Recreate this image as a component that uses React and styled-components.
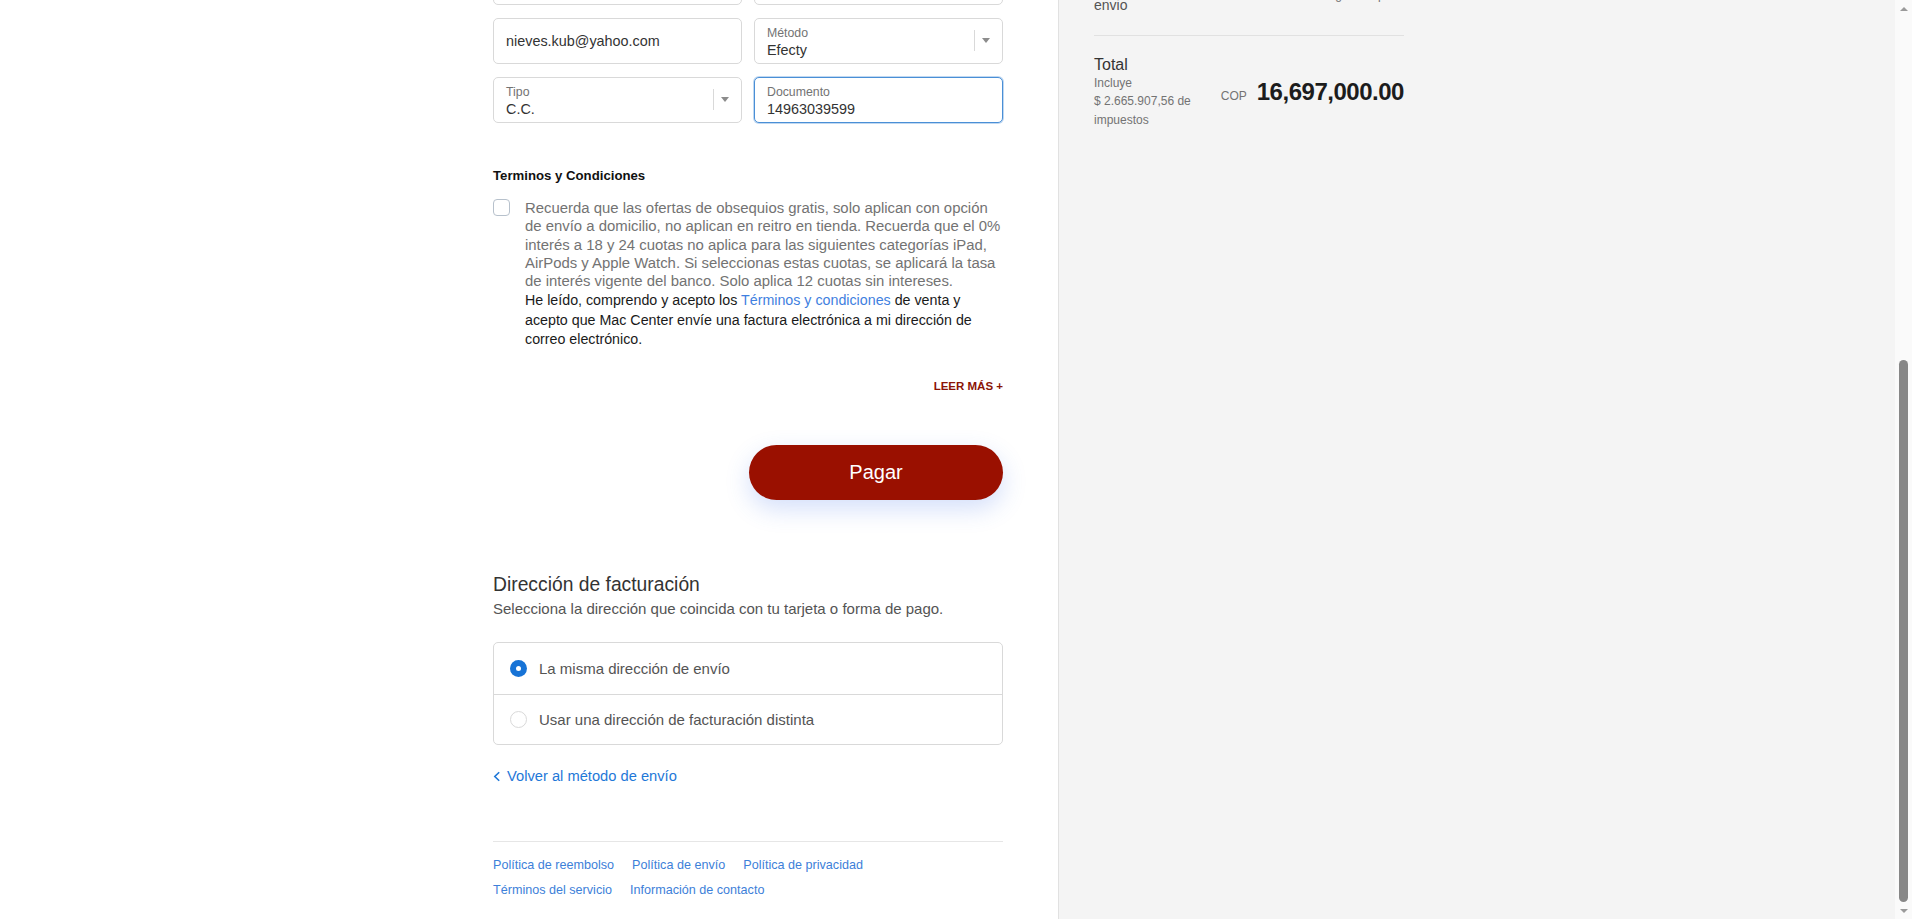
import React, { useLayoutEffect, useRef } from "react";
import styled, { createGlobalStyle } from "styled-components";

const GlobalStyle = createGlobalStyle`
  html, body {
    margin: 0;
    padding: 0;
  }
  body {
    font-family: "Liberation Sans", Arial, sans-serif;
    color: #333333;
  }
  *, *::before, *::after {
    box-sizing: border-box;
  }
`;

const Frame = styled.div`
  height: 100vh;
  display: flex;
  overflow: hidden;
`;

const Page = styled.div`
  flex: 1;
  min-width: 0;
  overflow-y: scroll;
  scrollbar-width: none;
  background: #ffffff;
`;

/* window scrollbar, drawn at the right edge */
const ScrollRail = styled.div`
  flex: 0 0 17px;
  display: flex;
  flex-direction: column;
  align-items: center;
  background: #fafafa;
`;

const RailArrow = styled.span`
  flex: 0 0 17px;
  display: flex;
  align-items: center;
  justify-content: center;

  &::before {
    content: "";
    width: 0;
    height: 0;
    border-left: 4px solid transparent;
    border-right: 4px solid transparent;
    border-${(p) => (p.$down ? "top" : "bottom")}: 4px solid #9a9a9a;
  }
`;

const RailTrack = styled.div`
  flex: 1;
  display: flex;
  flex-direction: column;
  justify-content: flex-end;
`;

const RailThumb = styled.span`
  width: 9px;
  height: 542px;
  border-radius: 5px;
  background: #878787;
`;

const Layout = styled.div`
  display: flex;
  min-height: 100%;
`;

const Main = styled.main`
  flex: 0 0 1058px;
  display: flex;
  justify-content: flex-end;
  padding: 0 55px 20px 0;
`;

const MainInner = styled.div`
  width: 510px;
`;

const Sidebar = styled.aside`
  flex: 1;
  background: #f4f4f4;
  border-left: 1px solid #e1e1e1;
  padding: 70.5px 0 0 35px;
`;

const SidebarInner = styled.div`
  width: 310px;
`;

/* header (scrolled out of view) */
const Header = styled.header`
  height: 201.5px;
  display: flex;
  flex-direction: column;
  justify-content: flex-end;
  padding-bottom: 22px;
`;

const Brand = styled.div`
  font-size: 28px;
  line-height: 32px;
  color: #333333;
`;

const Breadcrumb = styled.div`
  margin-top: 14px;
  font-size: 12px;
  line-height: 18px;
  color: #737373;
`;

const SectionTitle = styled.h2`
  margin: 32px 0 0;
  font-size: 18px;
  font-weight: 400;
  line-height: 24px;
  color: #333333;
`;

/* fields */
const FieldGrid = styled.div`
  display: grid;
  grid-template-columns: 1fr 1fr;
  grid-auto-rows: 46px;
  gap: 13px 12px;
`;

const Field = styled.div`
  border: 1px solid ${(p) => (p.$focused ? "#4a8fd6" : "#d9d9d9")};
  box-shadow: ${(p) => (p.$focused ? "0 0 0 1px rgba(74, 143, 214, 0.35)" : "none")};
  border-radius: 5px;
  background: #ffffff;
  padding: 0 12px;
  display: flex;
  align-items: center;
  gap: 9px;
`;

const FieldBody = styled.div`
  flex: 1;
  min-width: 0;
  display: flex;
  flex-direction: column;
  padding-top: ${(p) => (p.$labelled ? "2px" : "0")};
`;

const FieldLabel = styled.span`
  font-size: 12.3px;
  line-height: 16px;
  color: #737373;
`;

const FieldValue = styled.span`
  font-size: 14.4px;
  line-height: 18px;
  color: #333333;
`;

const Caret = styled.span`
  display: flex;
  align-items: center;
  gap: 7px;
`;

const CaretLine = styled.span`
  width: 1px;
  height: 21px;
  background: #d9d9d9;
`;

const CaretArrow = styled.span`
  width: 0;
  height: 0;
  border-left: 4.5px solid transparent;
  border-right: 4.5px solid transparent;
  border-top: 5px solid #8c8c8c;
`;

/* terms */
const TermsTitle = styled.h3`
  margin: 43px 0 0;
  font-size: 13.2px;
  font-weight: 700;
  line-height: 20px;
  color: #111111;
`;

const TermsRow = styled.div`
  margin-top: 13.6px;
  display: flex;
  gap: 15px;
`;

const Checkbox = styled.span`
  flex: 0 0 17px;
  height: 17px;
  border: 1px solid #b7c1cc;
  border-radius: 4px;
  background: #ffffff;
`;

const TermsText = styled.div`
  display: flex;
  flex-direction: column;
  white-space: nowrap;
`;

const Disclaimer = styled.p`
  margin: 0;
  font-size: 14.9px;
  line-height: 18.35px;
  color: #737373;
`;

const Consent = styled.p`
  margin: 0;
  font-size: 14.25px;
  line-height: 19.8px;
  color: #1a1a1a;
`;

const InlineLink = styled.a`
  color: #3f7fe0;
  text-decoration: none;
`;

const ReadMore = styled.div`
  margin-top: 27.6px;
  text-align: right;
  font-size: 11.5px;
  font-weight: 700;
  line-height: 16px;
  color: #8a1406;
`;

const PayRow = styled.div`
  margin-top: 51.5px;
  display: flex;
  justify-content: flex-end;
`;

const PayButton = styled.button`
  width: 254px;
  height: 55px;
  border: none;
  border-radius: 28px;
  background: #9a1000;
  color: #ffffff;
  font-family: inherit;
  font-size: 20px;
  box-shadow: 0 9px 24px rgba(60, 110, 230, 0.22);
  cursor: pointer;
`;

/* billing */
const BillingTitle = styled.h2`
  margin: 72.5px 0 0;
  font-size: 19.3px;
  font-weight: 400;
  line-height: 24px;
  color: #333333;
`;

const BillingHint = styled.p`
  margin: 2.4px 0 0;
  font-size: 15px;
  line-height: 20px;
  color: #545454;
`;

const RadioList = styled.div`
  margin-top: 23px;
  border: 1px solid #d9d9d9;
  border-radius: 5px;
`;

const RadioRow = styled.label`
  height: ${(p) => (p.$last ? "50px" : "51px")};
  display: flex;
  align-items: center;
  gap: 12px;
  padding-left: 16px;
  font-size: 15px;
  color: #545454;
  border-top: ${(p) => (p.$first ? "none" : "1px solid #d9d9d9")};
`;

const Radio = styled.span`
  position: relative;
  flex: 0 0 17px;
  height: 17px;
  border-radius: 50%;
  border: ${(p) => (p.$checked ? "none" : "1px solid #d9d9d9")};
  background: ${(p) => (p.$checked ? "#1773d6" : "#ffffff")};

  &::after {
    content: "";
    display: ${(p) => (p.$checked ? "block" : "none")};
    position: absolute;
    left: 6px;
    top: 6px;
    width: 5px;
    height: 5px;
    border-radius: 50%;
    background: #ffffff;
  }
`;

const BackRow = styled.div`
  margin-top: 21px;
`;

const BackLink = styled.a`
  display: inline-flex;
  align-items: center;
  gap: 6px;
  font-size: 14.7px;
  line-height: 20px;
  color: #1f78d8;
  text-decoration: none;
`;

const FooterRule = styled.hr`
  margin: 55px 0 0;
  border: none;
  border-top: 1px solid #e6e6e6;
`;

const PolicyList = styled.ul`
  margin: 11px 0 0;
  padding: 0;
  list-style: none;
  display: flex;
  flex-wrap: wrap;
`;

const PolicyItem = styled.li`
  margin-right: 18px;
  font-size: 12.6px;
  line-height: 24.5px;
`;

const PolicyLink = styled.a`
  color: #3d80d9;
  text-decoration: none;
`;

/* sidebar */
const ProductRow = styled.div`
  height: 64px;
  display: flex;
  align-items: center;
  gap: 14px;
`;

const Thumb = styled.div`
  position: relative;
  flex: 0 0 64px;
  height: 64px;
  border-radius: 8px;
  border: 1px solid #e1e1e1;
  background: #ffffff;
`;

const Badge = styled.span`
  position: absolute;
  top: -9px;
  right: -9px;
  min-width: 20px;
  height: 20px;
  border-radius: 10px;
  background: #7f7f7f;
  color: #ffffff;
  font-size: 12px;
  line-height: 20px;
  text-align: center;
`;

const ProductName = styled.span`
  flex: 1;
  font-size: 14px;
  font-weight: 700;
  color: #323232;
`;

const ProductPrice = styled.span`
  font-size: 14px;
  color: #323232;
`;

const SideRule = styled.div`
  height: 1px;
  background: #e1e1e1;
  margin-top: ${(p) => p.$top || "0px"};
`;

const SummaryRows = styled.div`
  padding-top: 24px;
  display: flex;
  flex-direction: column;
  gap: 12px;
`;

const SummaryRow = styled.div`
  display: flex;
  align-items: center;
  justify-content: space-between;
  font-size: 14px;
  line-height: 21px;
  color: #535353;
`;

const SummaryLabel = styled.span`
  width: ${(p) => p.$width || "auto"};
`;

const SummaryNote = styled.span`
  font-size: 12px;
  line-height: 16px;
  color: #737373;
`;

const TotalRow = styled.div`
  margin-top: 18.8px;
  display: flex;
  align-items: center;
`;

const TotalInfo = styled.div`
  width: 112px;
  display: flex;
  flex-direction: column;
`;

const TotalLabel = styled.span`
  font-size: 16px;
  line-height: 19px;
  color: #333333;
`;

const TotalNote = styled.span`
  font-size: 12px;
  line-height: 18.5px;
  color: #737373;
`;

const PriceGroup = styled.div`
  margin-left: auto;
  display: flex;
  align-items: baseline;
  gap: 10px;
`;

const Currency = styled.span`
  font-size: 12px;
  color: #737373;
`;

const Amount = styled.span`
  font-size: 24px;
  font-weight: 700;
  line-height: 24px;
  letter-spacing: -0.02em;
  color: #1c1c1c;
`;

const SelectField = ({ label, value }) => (
  <Field>
    <FieldBody $labelled>
      <FieldLabel>{label}</FieldLabel>
      <FieldValue>{value}</FieldValue>
    </FieldBody>
    <Caret>
      <CaretLine />
      <CaretArrow />
    </Caret>
  </Field>
);

const TextField = ({ label, value, focused }) => (
  <Field $focused={focused}>
    <FieldBody $labelled={!!label}>
      {label && <FieldLabel>{label}</FieldLabel>}
      <FieldValue>{value}</FieldValue>
    </FieldBody>
  </Field>
);

const policies = [
  "Política de reembolso",
  "Política de envío",
  "Política de privacidad",
  "Términos del servicio",
  "Información de contacto",
];

export default function App() {
  const pageRef = useRef(null);

  useLayoutEffect(() => {
    if (pageRef.current) pageRef.current.scrollTop = 243;
  }, []);

  return (
    <>
      <GlobalStyle />
      <Frame>
        <Page ref={pageRef}>
          <Layout>
            <Main>
              <MainInner>
                <Header>
                  <Brand>Mac Center</Brand>
                  <Breadcrumb>Carrito › Información › Envío › Pago</Breadcrumb>
                  <SectionTitle>Datos del pagador</SectionTitle>
                </Header>

                <FieldGrid>
                  <TextField label="Nombre" value="Nieves" />
                  <TextField label="Apellido" value="Kub" />
                  <TextField value="nieves.kub@yahoo.com" />
                  <SelectField label="Método" value="Efecty" />
                  <SelectField label="Tipo" value="C.C." />
                  <TextField label="Documento" value="14963039599" focused />
                </FieldGrid>

                <TermsTitle>Terminos y Condiciones</TermsTitle>
                <TermsRow>
                  <Checkbox />
                  <TermsText>
                    <Disclaimer>
                      Recuerda que las ofertas de obsequios gratis, solo aplican con opción
                      <br />
                      de envío a domicilio, no aplican en reitro en tienda. Recuerda que el 0%
                      <br />
                      interés a 18 y 24 cuotas no aplica para las siguientes categorías iPad,
                      <br />
                      AirPods y Apple Watch. Si seleccionas estas cuotas, se aplicará la tasa
                      <br />
                      de interés vigente del banco. Solo aplica 12 cuotas sin intereses.
                    </Disclaimer>
                    <Consent>
                      He leído, comprendo y acepto los{" "}
                      <InlineLink href="#">Términos y condiciones</InlineLink> de venta y
                      <br />
                      acepto que Mac Center envíe una factura electrónica a mi dirección de
                      <br />
                      correo electrónico.
                    </Consent>
                  </TermsText>
                </TermsRow>
                <ReadMore>LEER MÁS +</ReadMore>

                <PayRow>
                  <PayButton type="button">Pagar</PayButton>
                </PayRow>

                <BillingTitle>Dirección de facturación</BillingTitle>
                <BillingHint>Selecciona la dirección que coincida con tu tarjeta o forma de pago.</BillingHint>
                <RadioList>
                  <RadioRow $first>
                    <Radio $checked />
                    La misma dirección de envío
                  </RadioRow>
                  <RadioRow $last>
                    <Radio />
                    Usar una dirección de facturación distinta
                  </RadioRow>
                </RadioList>

                <BackRow>
                  <BackLink href="#">
                    <svg width="8" height="11" viewBox="0 0 8 11" fill="none">
                      <path d="M6.2 1.2 1.8 5.5l4.4 4.3" stroke="currentColor" strokeWidth="1.6" />
                    </svg>
                    Volver al método de envío
                  </BackLink>
                </BackRow>

                <FooterRule />
                <PolicyList>
                  {policies.map((p) => (
                    <PolicyItem key={p}>
                      <PolicyLink href="#">{p}</PolicyLink>
                    </PolicyItem>
                  ))}
                </PolicyList>
              </MainInner>
            </Main>

            <Sidebar>
              <SidebarInner>
                <ProductRow>
                  <Thumb>
                    <Badge>1</Badge>
                  </Thumb>
                  <ProductName>MacBook Pro 16"</ProductName>
                  <ProductPrice>$16,697,000.00</ProductPrice>
                </ProductRow>
                <SideRule $top="24px" />
                <SummaryRows>
                  <SummaryRow>
                    <span>Subtotal</span>
                    <span>$16,697,000.00</span>
                  </SummaryRow>
                  <SummaryRow>
                    <SummaryLabel $width="80px">Costo de envio</SummaryLabel>
                    <SummaryNote>Calculado en el siguiente paso</SummaryNote>
                  </SummaryRow>
                </SummaryRows>
                <SideRule $top="19.5px" />
                <TotalRow>
                  <TotalInfo>
                    <TotalLabel>Total</TotalLabel>
                    <TotalNote>Incluye</TotalNote>
                    <TotalNote>$ 2.665.907,56 de impuestos</TotalNote>
                  </TotalInfo>
                  <PriceGroup>
                    <Currency>COP</Currency>
                    <Amount>16,697,000.00</Amount>
                  </PriceGroup>
                </TotalRow>
              </SidebarInner>
            </Sidebar>
          </Layout>
        </Page>
        <ScrollRail>
          <RailArrow />
          <RailTrack>
            <RailThumb />
          </RailTrack>
          <RailArrow $down />
        </ScrollRail>
      </Frame>
    </>
  );
}
